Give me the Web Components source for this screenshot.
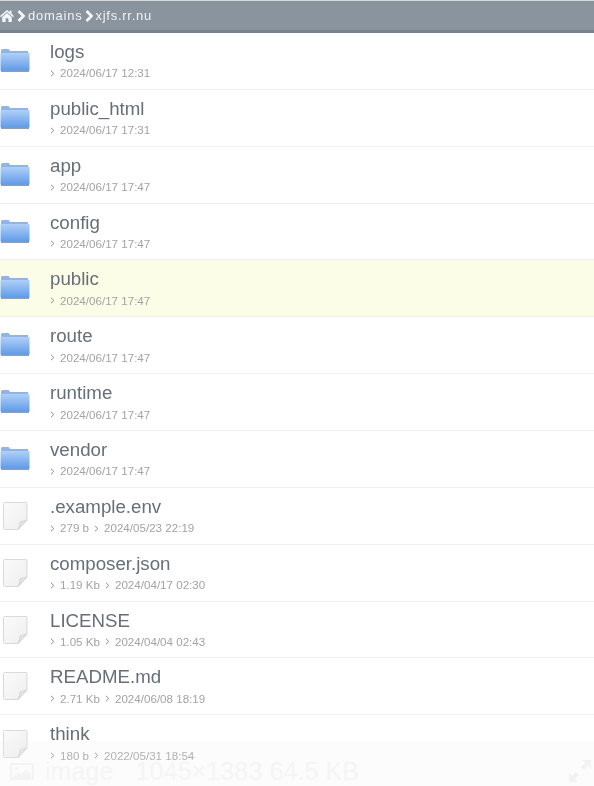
<!DOCTYPE html>
<html>
<head>
<meta charset="utf-8">
<style>
  html, body { margin: 0; height: 100%; background: #fff; overflow: hidden; }
  body { font-family: "Liberation Sans", Arial, sans-serif; }
</style>
</head>
<body>
<file-browser></file-browser>
<script>
const crumbBarTemplate = document.createElement('template')
crumbBarTemplate.innerHTML = `
  <style>
    :host {
      display: flex;
      align-items: center;
      box-sizing: border-box;
      height: 33px;
      background: #89949e;
      border-top: 1px solid #d5d9dd;
      border-bottom: 3px solid #77828c;
      color: #f0f2f4;
      font-size: 13px;
      letter-spacing: 0.75px;
      white-space: nowrap;
    }
    svg { display: block; flex: none; fill: #f4f6f7; }
    .chev { margin: 0 3px 0 3px; fill: none; stroke: #f4f6f7; stroke-width: 2.8; }
    #last { margin-left: -1px; }
    span { filter: blur(0.3px); }
  </style>
  <svg width="14" height="13" viewBox="0 0 14 13"><path d="M7 1 L0 7 L1 8.2 L7 3 L13 8.2 L14 7 L11.5 4.8 V1.5 H9.8 V3.3 Z M2.2 8.2 V13 H5.6 V9.3 H8.4 V13 H11.8 V8.2 L7 4.1 Z"/></svg>
  <svg class="chev" width="8" height="12" viewBox="0 0 8 12"><path d="M1.5 1 L6.5 6 L1.5 11"/></svg>
  <span>domains</span>
  <svg class="chev" width="8" height="12" viewBox="0 0 8 12"><path d="M1.5 1 L6.5 6 L1.5 11"/></svg>
  <span id="last">xjfs.rr.nu</span>
`

class CrumbBar extends HTMLElement {
  constructor() {
    super()
    this.attachShadow({ mode: 'open' })
    this.shadowRoot.appendChild(crumbBarTemplate.content.cloneNode(true))
  }
}
customElements.define('crumb-bar', CrumbBar)

const fileRowTemplate = document.createElement('template')
fileRowTemplate.innerHTML = `
  <style>
    :host {
      display: flex;
      box-sizing: border-box;
      height: 56.87px;
      border-bottom: 1px solid #f1f1f1;
      background: #fff;
    }
    :host(:last-child) { border-bottom: 0; }
    :host([active]) { background: #fcfde7; }
    #icon { flex: none; width: 50px; display: flex; align-items: center; box-sizing: border-box; filter: blur(0.3px); }
    #text { flex: 1; min-width: 0; padding-top: 8px; filter: blur(0.3px); }
    #name {
      font-size: 18.7px;
      line-height: 21px;
      color: #666f78;
    }
    #meta {
      display: flex;
      align-items: center;
      margin-top: 4.4px;
      font-size: 11.6px;
      line-height: 14px;
      color: #a3a3a3;
    }
    .sep { flex: none; width: 5px; height: 7px; margin: 0 5px 0 0; fill: none; stroke: #8d8d8d; stroke-width: 1; }
    .val { margin-right: 5px; }
    svg { display: block; }
  </style>
  <div id="icon"></div>
  <div id="text">
    <div id="name"></div>
    <div id="meta"></div>
  </div>
`

const folderIcon = `
  <svg width="30" height="26" viewBox="0 0 30 26">
    <defs>
      <linearGradient id="fb" x1="0" y1="0" x2="0" y2="1">
        <stop offset="0" stop-color="#b0d0f7"/>
        <stop offset="1" stop-color="#5b98e8"/>
      </linearGradient>
    </defs>
    <path d="M1 6 V2.5 Q1 1 2.5 1 H8 Q9.5 1 10 3 H28 V8 H1 Z" fill="#8fb5e6"/>
    <path d="M0.5 5 H29.5 V21.5 Q29.5 23.5 28 23.5 H2 Q0.5 23.5 0.5 21.5 Z" fill="url(#fb)"/>
    <rect x="1" y="22.6" width="28" height="1.4" fill="#8aa0b8"/>
  </svg>`

const fileIcon = `
  <svg width="30" height="32" viewBox="0 0 30 32">
    <defs>
      <linearGradient id="pg" x1="0" y1="0" x2="1" y2="1">
        <stop offset="0" stop-color="#fbfbfb"/>
        <stop offset="1" stop-color="#eeeeee"/>
      </linearGradient>
    </defs>
    <path d="M4.5 2.5 H26 Q27 2.5 27 3.5 V20 L18 29.5 H4.5 Q3.5 29.5 3.5 28.5 V3.5 Q3.5 2.5 4.5 2.5 Z" fill="url(#pg)" stroke="#dadada"/>
    <path d="M27 20 Q22 21.5 20 22 Q20 26 18 29.5 Z" fill="#e4e4e4" stroke="#cccccc" stroke-width="0.7"/>
  </svg>`

class FileRow extends HTMLElement {
  constructor() {
    super()
    this.attachShadow({ mode: 'open' })
    this.shadowRoot.appendChild(fileRowTemplate.content.cloneNode(true))
  }

  static observedAttributes = ['name', 'size', 'date', 'kind']

  element(id) { return this.shadowRoot.getElementById(id) }

  connectedCallback() { this.update() }
  attributeChangedCallback() { this.update() }

  update() {
    this.element('icon').innerHTML = this.getAttribute('kind') === 'folder' ? folderIcon : fileIcon
    this.element('name').textContent = this.getAttribute('name')
    const vals = [this.getAttribute('size'), this.getAttribute('date')].filter(Boolean)
    this.element('meta').innerHTML = vals.map(v =>
      `<svg class="sep" viewBox="0 0 5 7"><path d="M1 .8 L3.8 3.5 L1 6.2"/></svg><span class="val">${v}</span>`
    ).join('')
  }
}
customElements.define('file-row', FileRow)

const imageInfoTemplate = document.createElement('template')
imageInfoTemplate.innerHTML = `
  <style>
    :host {
      position: absolute;
      left: 0;
      right: 0;
      bottom: 0;
      height: 45px;
      display: flex;
      align-items: center;
      box-sizing: border-box;
      padding: 15px 2px 0 10px;
      background: rgba(240, 240, 240, 0.2);
      color: #f5f5f5;
      font-size: 25.2px;
      line-height: 20px;
    }
    svg { display: block; flex: none; }
    #name { margin-left: 11px; }
    #dims { margin-left: 22px; }
    #expand { margin-left: auto; }
  </style>
  <svg width="24" height="17" viewBox="0 0 24 17" fill="none" stroke="#f4f4f4" stroke-width="2">
    <rect x="1" y="1" width="22" height="15"/>
    <circle cx="6.5" cy="5.5" r="1.7" fill="#f4f4f4" stroke="none"/>
    <path d="M3 14 L8 9.5 L11 11.5 L16 6.5 L21 10.5 V15 H3 Z" fill="#f4f4f4" stroke="none"/>
  </svg>
  <span id="name">image</span>
  <span id="dims">1045×1383 64.5 KB</span>
  <svg id="expand" width="24" height="24" viewBox="0 0 24 24" fill="#f2f2f2">
    <path d="M14 1 H23 V10 L20 7 L16 11 L13 8 L17 4 Z"/>
    <path d="M1 23 V14 L4 17 L8 13 L11 16 L7 20 L10 23 Z"/>
  </svg>
`

class ImageInfo extends HTMLElement {
  constructor() {
    super()
    this.attachShadow({ mode: 'open' })
    this.shadowRoot.appendChild(imageInfoTemplate.content.cloneNode(true))
  }
}
customElements.define('image-info', ImageInfo)

const fileBrowserTemplate = document.createElement('template')
fileBrowserTemplate.innerHTML = `
  <style>
    :host {
      display: block;
      position: relative;
      height: 786px;
      overflow: hidden;
      background: #fff;
    }
  </style>
  <crumb-bar></crumb-bar>
  <div id="list"></div>
  <image-info></image-info>
`

const entries = [
  { kind: 'folder', name: 'logs', date: '2024/06/17 12:31' },
  { kind: 'folder', name: 'public_html', date: '2024/06/17 17:31' },
  { kind: 'folder', name: 'app', date: '2024/06/17 17:47' },
  { kind: 'folder', name: 'config', date: '2024/06/17 17:47' },
  { kind: 'folder', name: 'public', date: '2024/06/17 17:47', active: true },
  { kind: 'folder', name: 'route', date: '2024/06/17 17:47' },
  { kind: 'folder', name: 'runtime', date: '2024/06/17 17:47' },
  { kind: 'folder', name: 'vendor', date: '2024/06/17 17:47' },
  { kind: 'file', name: '.example.env', size: '279 b', date: '2024/05/23 22:19' },
  { kind: 'file', name: 'composer.json', size: '1.19 Kb', date: '2024/04/17 02:30' },
  { kind: 'file', name: 'LICENSE', size: '1.05 Kb', date: '2024/04/04 02:43' },
  { kind: 'file', name: 'README.md', size: '2.71 Kb', date: '2024/06/08 18:19' },
  { kind: 'file', name: 'think', size: '180 b', date: '2022/05/31 18:54' }
]

class FileBrowser extends HTMLElement {
  constructor() {
    super()
    this.attachShadow({ mode: 'open' })
    this.shadowRoot.appendChild(fileBrowserTemplate.content.cloneNode(true))
  }

  connectedCallback() {
    const list = this.shadowRoot.getElementById('list')
    entries.forEach(e => {
      const row = document.createElement('file-row')
      row.setAttribute('kind', e.kind)
      row.setAttribute('name', e.name)
      row.setAttribute('date', e.date)
      if (e.size) row.setAttribute('size', e.size)
      row.toggleAttribute('active', !!e.active)
      list.appendChild(row)
    })
  }
}
customElements.define('file-browser', FileBrowser)
</script>
</body>
</html>
